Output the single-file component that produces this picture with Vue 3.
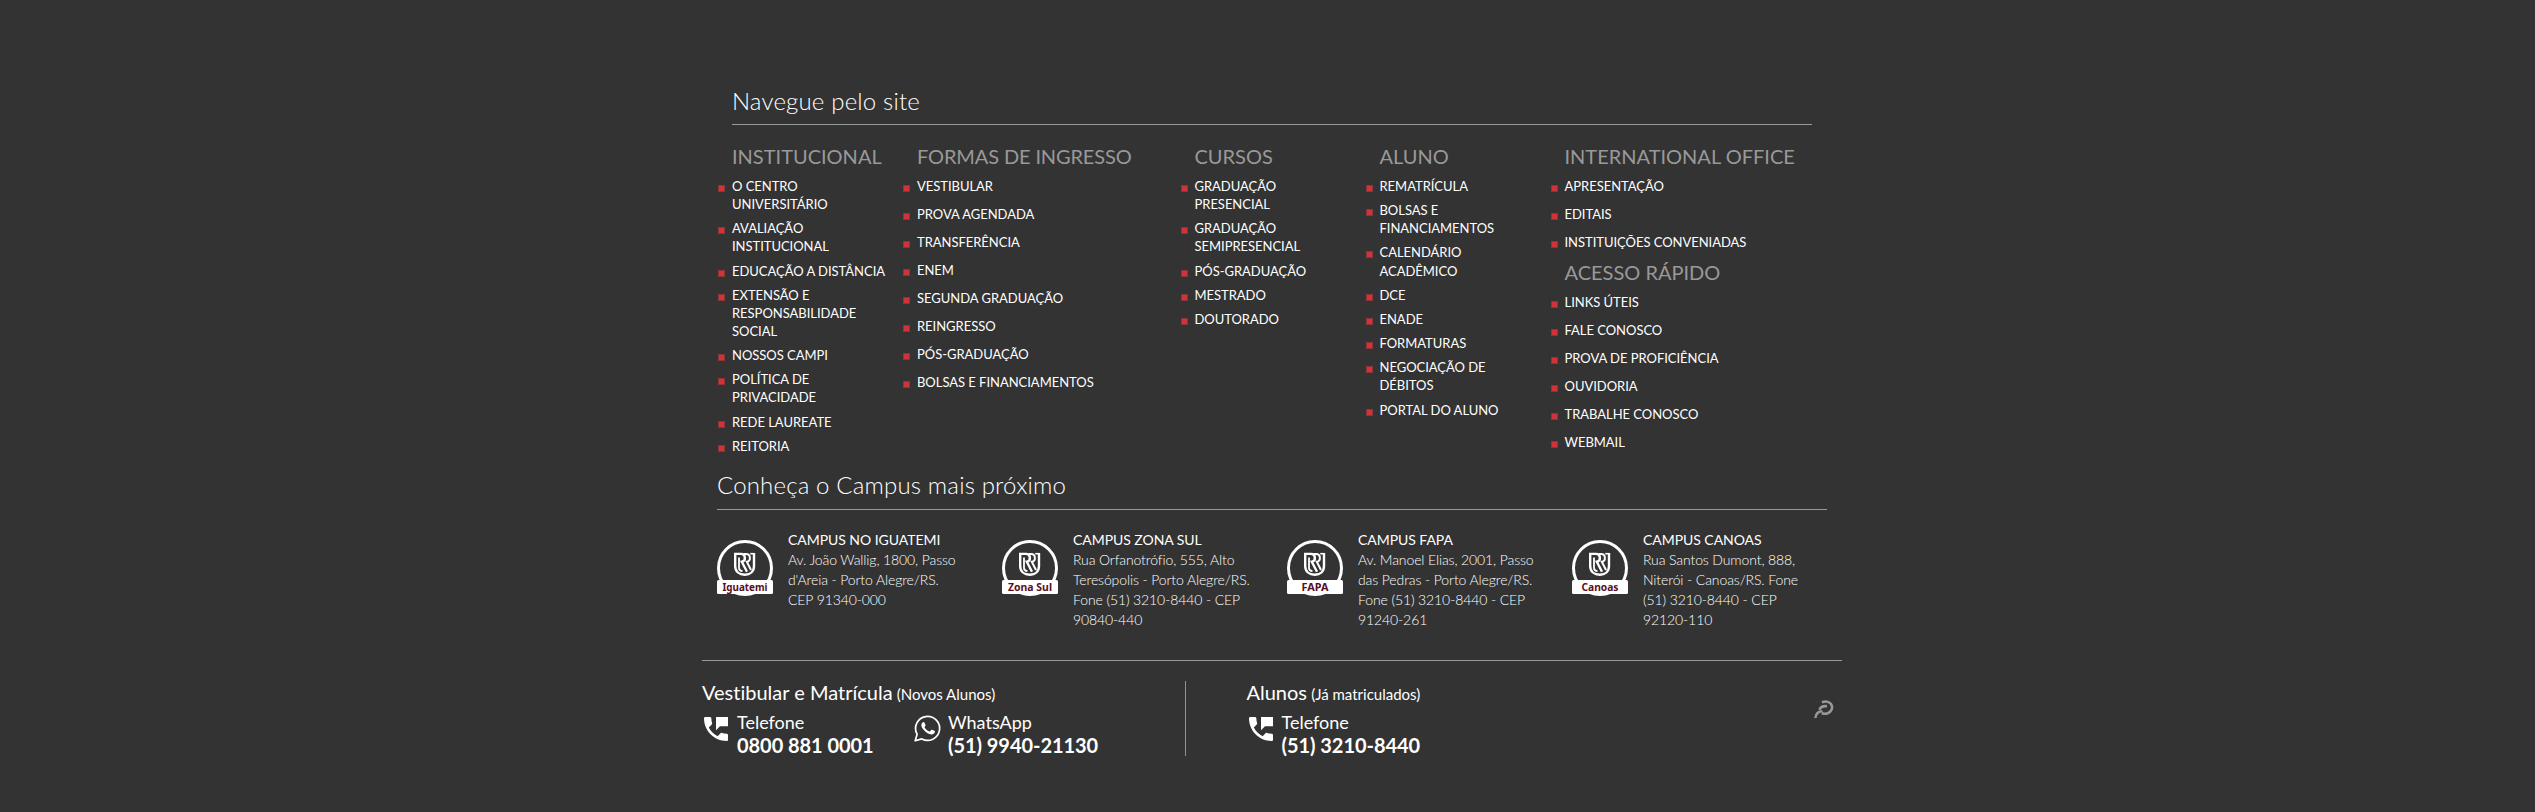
<script setup>
const columns = [
  { size: 2, dense: true, groups: [{ title: 'INSTITUCIONAL', items: [
    ['O CENTRO', 'UNIVERSITÁRIO'], ['AVALIAÇÃO', 'INSTITUCIONAL'], ['EDUCAÇÃO A DISTÂNCIA'],
    ['EXTENSÃO E', 'RESPONSABILIDADE', 'SOCIAL'], ['NOSSOS CAMPI'], ['POLÍTICA DE', 'PRIVACIDADE'],
    ['REDE LAUREATE'], ['REITORIA']] }] },
  { size: 3, dense: false, groups: [{ title: 'FORMAS DE INGRESSO', tight: true, items: [
    ['VESTIBULAR'], ['PROVA AGENDADA'], ['TRANSFERÊNCIA'], ['ENEM'], ['SEGUNDA GRADUAÇÃO'],
    ['REINGRESSO'], ['PÓS-GRADUAÇÃO'], ['BOLSAS E FINANCIAMENTOS']] }] },
  { size: 2, dense: true, groups: [{ title: 'CURSOS', items: [
    ['GRADUAÇÃO', 'PRESENCIAL'], ['GRADUAÇÃO', 'SEMIPRESENCIAL'], ['PÓS-GRADUAÇÃO'],
    ['MESTRADO'], ['DOUTORADO']] }] },
  { size: 2, dense: true, groups: [{ title: 'ALUNO', items: [
    ['REMATRÍCULA'], ['BOLSAS E', 'FINANCIAMENTOS'], ['CALENDÁRIO', 'ACADÊMICO'], ['DCE'],
    ['ENADE'], ['FORMATURAS'], ['NEGOCIAÇÃO DE', 'DÉBITOS'], ['PORTAL DO ALUNO']] }] },
  { size: 3, dense: false, groups: [
    { title: 'INTERNATIONAL OFFICE', items: [['APRESENTAÇÃO'], ['EDITAIS'], ['INSTITUIÇÕES CONVENIADAS']] },
    { title: 'ACESSO RÁPIDO', items: [['LINKS ÚTEIS'], ['FALE CONOSCO'], ['PROVA DE PROFICIÊNCIA'],
      ['OUVIDORIA'], ['TRABALHE CONOSCO'], ['WEBMAIL']] }] },
]

const campuses = [
  { tag: 'Iguatemi', w: 45, name: 'CAMPUS NO IGUATEMI', lines: ['Av. João Wallig, 1800, Passo', "d'Areia - Porto Alegre/RS.", 'CEP 91340-000'] },
  { tag: 'Zona Sul', w: 44, name: 'CAMPUS ZONA SUL', lines: ['Rua Orfanotrófio, 555, Alto', 'Teresópolis - Porto Alegre/RS.', 'Fone (51) 3210-8440 - CEP', '90840-440'] },
  { tag: 'FAPA', w: 27, name: 'CAMPUS FAPA', lines: ['Av. Manoel Elias, 2001, Passo', 'das Pedras - Porto Alegre/RS.', 'Fone (51) 3210-8440 - CEP', '91240-261'] },
  { tag: 'Canoas', w: 37, name: 'CAMPUS CANOAS', lines: ['Rua Santos Dumont, 888,', 'Niterói - Canoas/RS. Fone', '(51) 3210-8440 - CEP', '92120-110'] },
]

const phonePath = 'M20 15.5c-1.25 0-2.45-.2-3.57-.57-.35-.11-.74-.03-1.02.24l-2.2 2.2c-2.83-1.44-5.15-3.75-6.59-6.58l2.2-2.21c.28-.27.36-.66.25-1.01C8.7 6.45 8.5 5.25 8.5 4c0-.55-.45-1-1-1H4c-.55 0-1 .45-1 1 0 9.39 7.61 17 17 17 .55 0 1-.45 1-1v-3.500c0-.55-.45-1-1-1zM12 3v10l3-3h6V3h-9z'
</script>

<template>
  <footer class="footer">
    <section class="nav">
      <h2 class="title">Navegue pelo site</h2>
      <div class="cols">
        <div v-for="(col, i) in columns" :key="i" class="col" :class="[col.size === 3 ? 'wide' : 'narrow', { dense: col.dense }]">
          <template v-for="g in col.groups" :key="g.title">
            <h3 :class="{ tight: g.tight }">{{ g.title }}</h3>
            <ul>
              <li v-for="item in g.items" :key="item.join()">
                <a><span v-for="line in item" :key="line">{{ line }}</span></a>
              </li>
            </ul>
          </template>
        </div>
      </div>
    </section>

    <section class="campus">
      <h2 class="title">Conheça o Campus mais próximo</h2>
      <div class="cards">
        <article v-for="c in campuses" :key="c.tag" class="card">
          <svg class="badge" viewBox="0 0 56 56">
            <circle cx="28" cy="28" r="26.500" fill="none" stroke="#fff" stroke-width="3" />
            <rect x="0" y="40" width="56" height="14" rx="1.500" fill="#fff" />
            <g fill="none" stroke="#fff">
              <path stroke-width="2.400" d="M17 13.900h7.200c4.600 0 5 7.200.6 7.800l5.200 10" />
              <path stroke-width="2.400" d="M18.200 13.500v12.500c0 5.600 4.200 8.700 9.600 8.700s9.200-3.100 9.200-8.700V13" />
              <path stroke-width="2" d="M27 13.900h2.200c4.600 0 5 7.200.6 7.800l4.200 8.300" />
              <path stroke-width="1.800" d="M22 17.500v10.500c0 2 1.500 3 3.500 3.200" />
              <path stroke-width="1.600" d="M33.200 13.700h4" />
            </g>
            <text x="28" y="51" text-anchor="middle" :textLength="c.w" lengthAdjust="spacingAndGlyphs">{{ c.tag }}</text>
          </svg>
          <div class="address">
            <h4>{{ c.name }}</h4>
            <p v-for="line in c.lines" :key="line">{{ line }}</p>
          </div>
        </article>
      </div>
    </section>

    <section class="contact">
      <div class="group first">
        <h5>Vestibular e Matrícula <small>(Novos Alunos)</small></h5>
        <div class="phones">
          <div class="phone tel">
            <svg class="ico" viewBox="3 3 18 18"><path :d="phonePath" fill="#fff" /></svg>
            <div><p>Telefone</p><strong>0800 881 0001</strong></div>
          </div>
          <div class="phone">
            <svg class="wa" viewBox="0 0 27 27">
              <path d="M1.200 25.800l1.900-6.600A12 12 0 1 1 7.800 23.900z" fill="none" stroke="#fff" stroke-width="1.700" stroke-linejoin="round" />
              <path d="M9.200 7.200c.6-.2 1.100 0 1.300.5l1 2.300c.2.500-.1.900-.9 1.900-.2.300 0 .6.200.9 1.100 1.800 2.500 2.900 4.500 3.700.3.100.5.100.8-.2l1.100-1.400c.3-.3.600-.3.900-.2l2.300 1.100c.5.300.6.400.5 1-.3 1.900-2 2.800-3.600 2.700-2.600-.2-5.100-1.800-7-4C8.400 13.300 7 11.200 7.400 9.400c.2-1 .9-1.900 1.800-2.200z" fill="#fff" />
            </svg>
            <div><p>WhatsApp</p><strong>(51) 9940-21130</strong></div>
          </div>
        </div>
      </div>
      <div class="group second">
        <h5>Alunos <small>(Já matriculados)</small></h5>
        <div class="phones">
          <div class="phone">
            <svg class="ico" viewBox="3 3 18 18"><path :d="phonePath" fill="#fff" /></svg>
            <div><p>Telefone</p><strong>(51) 3210-8440</strong></div>
          </div>
        </div>
      </div>
      <svg class="mark" viewBox="0 0 20 18" fill="none" stroke="#999" stroke-width="2.500">
        <path d="M8 2.400C11 1 15 1.300 17 4c2.400 3.700.4 8-3.300 9.300-2 .7-4 .5-6-.1" />
        <path d="M13 6.200C9 5.800 6.400 7.200 5.400 9.800" />
        <path d="M8.500 11.200C4.500 11.200 1.900 13 1.400 18" />
      </svg>
    </section>
  </footer>
</template>

<style>
body { background: #333; }
</style>

<style scoped>
.footer {
  box-sizing: border-box;
  width: 1140px;
  height: 812px;
  margin-left: 702px;
  padding-top: 87px;
  font-family: Lato, sans-serif;
  font-variant-ligatures: none;
  color: #fff;
}
h2, h3, h4, h5, p, ul { margin: 0; padding: 0; font-weight: 400; }
.nav { padding: 0 30px; }
h2.title {
  font-size: 24px;
  font-weight: 300;
  line-height: 27px;
  letter-spacing: 0.17px;
  padding-bottom: 10px;
  border-bottom: 1px solid #999;
}
.cols { display: flex; height: 326px; margin: 20px -15px 0; }
.col { box-sizing: border-box; padding: 0 15px; white-space: nowrap; }
.narrow { flex: 0 0 185px; }
.wide { flex: 0 0 277.5px; }
.col:last-child { flex-basis: 262px; }
h3 { font-size: 20px; line-height: 22px; color: #999; margin-bottom: 10px; }
h3.tight { letter-spacing: -0.13px; }
ul { list-style: none; }
li {
  display: flex;
  margin: 0 0 10px -14px;
  font-size: 13px;
  line-height: 18px;
  letter-spacing: -0.03px;
}
.dense li { line-height: 18.1px; margin-bottom: 6.1px; }
li::before {
  content: '';
  box-sizing: border-box;
  flex: none;
  width: 7px;
  height: 7px;
  margin: 8px 7px 0 0;
  background: #d0343b;
  border: 1px solid #8c3438;
}
li span { display: block; }
.campus { padding: 0 15px; }
.campus .title { padding-bottom: 11px; }
.cards { display: flex; height: 130px; padding-top: 20px; }
.card { display: flex; flex: 0 0 285px; align-items: flex-start; white-space: nowrap; }
.badge { width: 56px; height: 56px; margin: 10px 15px 0 0; flex: none; }
.badge text { font: 700 11px 'Noto Sans', sans-serif; fill: #5a0f1e; }
.address { font-size: 14px; line-height: 20px; }
.address h4 { font-size: 14px; letter-spacing: -0.05px; }
.address p { font-weight: 300; letter-spacing: -0.11px; }
.contact { display: flex; border-top: 1px solid #999; padding-top: 20px; }
.first { width: 483px; height: 75px; border-right: 1px solid #8a949c; }
.second { width: 568px; padding-left: 60.5px; box-sizing: border-box; }
h5 { font-size: 20px; line-height: 22px; height: 30px; white-space: nowrap; }
small { font-size: 15px; margin-left: -1px; }
.phones { display: flex; }
.phone { display: flex; white-space: nowrap; }
.tel { width: 212px; }
.phone p { font-size: 18px; line-height: 22px; }
.phone strong { display: block; font-size: 20px; line-height: 24px; letter-spacing: -0.05px; }
.ico { width: 24px; height: 24px; margin: 6px 9px 0 2px; }
.wa { width: 27px; height: 27px; margin: 4px 7px 0 0; }
.mark { width: 20px; height: 18px; margin: 19px 0 0 60px; }
</style>
